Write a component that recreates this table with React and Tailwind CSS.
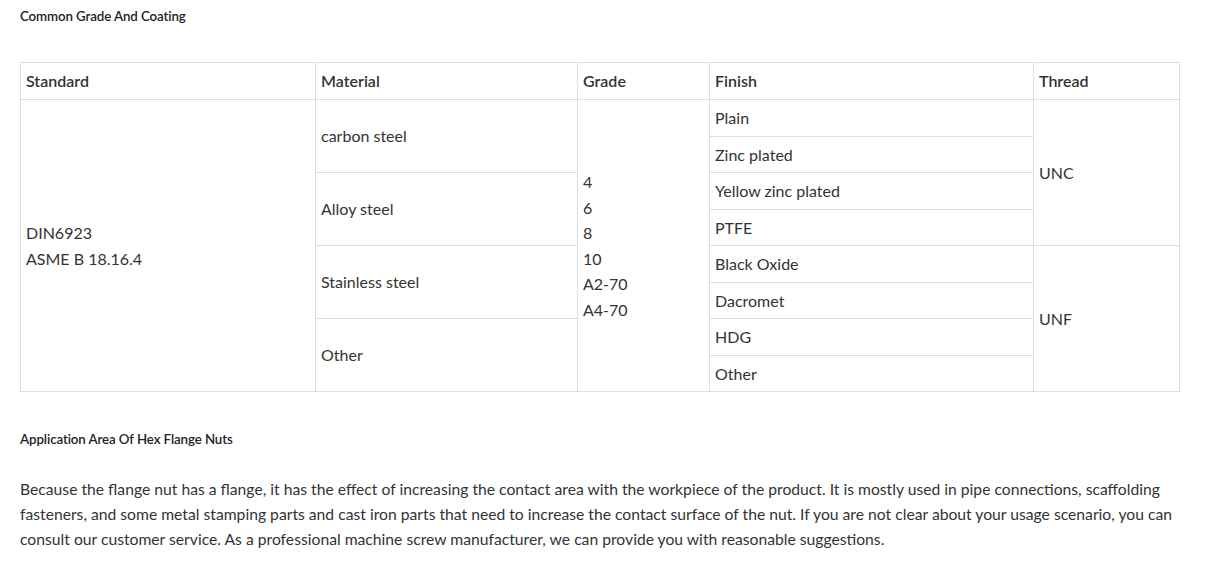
import React from "react";

const td = "border border-[#dddddd] px-[5px] py-[5px] align-middle";

export default function App() {
  const finishes = ["Plain", "Zinc plated", "Yellow zinc plated", "PTFE", "Black Oxide", "Dacromet", "HDG", "Other"];
  const materials = ["carbon steel", "Alloy steel", "Stainless steel", "Other"];
  return (
    <div className="w-[1225px] h-[562px] bg-white text-[#333333] overflow-hidden" style={{ fontFamily: "Lato, 'Open Sans', sans-serif" }}>
      <div className="px-[20px] pt-[6px] w-[1199px]">
        <h3 className="text-[13.3px] font-semibold tracking-[-0.1px] leading-[20px] text-[#222]">Common Grade And Coating</h3>
        <table className="mt-[36px] w-[1159px] border-collapse text-[16px] leading-[25.5px] table-fixed">
          <colgroup>
            <col className="w-[295px]" />
            <col className="w-[262px]" />
            <col className="w-[132px]" />
            <col className="w-[324px]" />
            <col className="w-[146px]" />
          </colgroup>
          <thead>
            <tr className="h-[37px]">
              <th className={`${td} text-left font-semibold`}>Standard</th>
              <th className={`${td} text-left font-semibold`}>Material</th>
              <th className={`${td} text-left font-semibold`}>Grade</th>
              <th className={`${td} text-left font-semibold`}>Finish</th>
              <th className={`${td} text-left font-semibold`}>Thread</th>
            </tr>
          </thead>
          <tbody>
            {finishes.map((f, i) => (
              <tr key={f + i} className="h-[36.5px]">
                {i === 0 && (
                  <td rowSpan={8} className={td}>
                    DIN6923<br />ASME B 18.16.4
                  </td>
                )}
                {i % 2 === 0 && (
                  <td rowSpan={2} className={td}>{materials[i / 2]}</td>
                )}
                {i === 0 && (
                  <td rowSpan={8} className={td}>
                    4<br />6<br />8<br />10<br />A2-70<br />A4-70
                  </td>
                )}
                <td className={td}>{f}</td>
                {i === 0 && <td rowSpan={4} className={td}>UNC</td>}
                {i === 4 && <td rowSpan={4} className={td}>UNF</td>}
              </tr>
            ))}
          </tbody>
        </table>
        <h3 className="mt-[37px] text-[13.3px] font-semibold tracking-[-0.1px] leading-[20px] text-[#222]">Application Area Of Hex Flange Nuts</h3>
        <p className="mt-[28px] text-[15.7px] leading-[25px]">
          Because the flange nut has a flange, it has the effect of increasing the contact area with the workpiece of the product. It is mostly used in pipe connections, scaffolding fasteners, and some metal stamping parts and cast iron parts that need to increase the contact surface of the nut. If you are not clear about your usage scenario, you can consult our customer service. As a professional machine screw manufacturer, we can provide you with reasonable suggestions.
        </p>
      </div>
    </div>
  );
}
